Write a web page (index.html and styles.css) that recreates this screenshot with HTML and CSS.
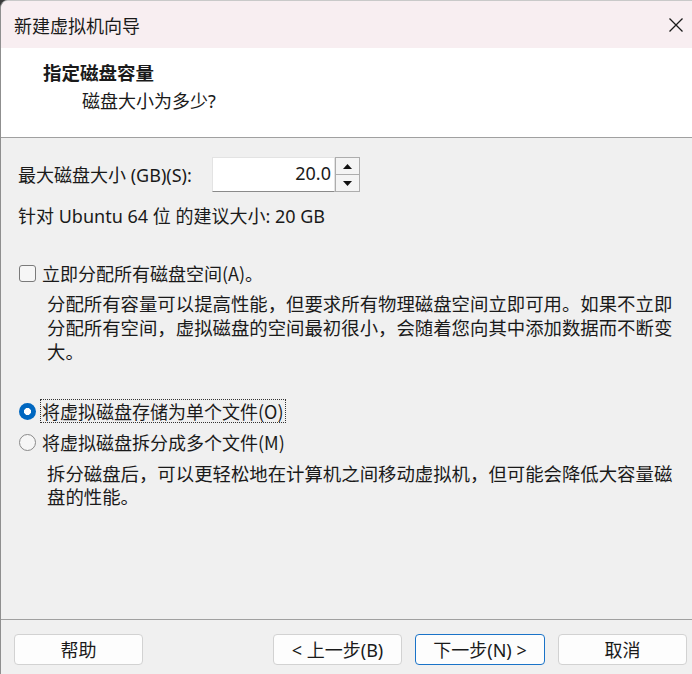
FILE: index.html
```html
<!DOCTYPE html>
<html lang="zh-CN">
<head>
<meta charset="utf-8">
<title>新建虚拟机向导</title>
<link rel="stylesheet" href="styles.css">
</head>
<body>
<div class="window">
  <div class="titlebar">
    <span class="title">新建虚拟机向导</span>
    <span class="close">
      <svg width="16" height="16" viewBox="0 0 16 16"><path d="M1.5 1.5 L14.5 14.5 M14.5 1.5 L1.5 14.5" stroke="#1a1a1a" stroke-width="1.3" fill="none"/></svg>
    </span>
  </div>
  <div class="header">
    <div class="h-title">指定磁盘容量</div>
    <div class="h-sub">磁盘大小为多少?</div>
  </div>
  <div class="body">
    <div class="size-row">
      <span class="size-label">最大磁盘大小 (GB)(S):</span>
      <div class="spin">
        <div class="spin-field">20.0</div>
        <div class="spin-btns">
          <span class="spin-btn"><svg width="9" height="5" viewBox="0 0 9 5"><path d="M0 5 L4.5 0 L9 5 Z" fill="#111"/></svg></span>
          <span class="spin-btn"><svg width="9" height="5" viewBox="0 0 9 5"><path d="M0 0 L4.5 5 L9 0 Z" fill="#111"/></svg></span>
        </div>
      </div>
    </div>
    <div class="rec">针对 Ubuntu 64 位 的建议大小: 20 GB</div>
    <div class="opt-row check-row">
      <span class="checkbox"></span>
      <span class="opt-label">立即分配所有磁盘空间(A)。</span>
    </div>
    <p class="desc">分配所有容量可以提高性能，但要求所有物理磁盘空间立即可用。如果不立即分配所有空间，虚拟磁盘的空间最初很小，会随着您向其中添加数据而不断变大。</p>
    <div class="opt-row radio-row1">
      <span class="radio checked"></span>
      <span class="opt-label focus">将虚拟磁盘存储为单个文件(O)</span>
    </div>
    <div class="opt-row radio-row2">
      <span class="radio"></span>
      <span class="opt-label">将虚拟磁盘拆分成多个文件(M)</span>
    </div>
    <p class="desc desc2">拆分磁盘后，可以更轻松地在计算机之间移动虚拟机，但可能会降低大容量磁盘的性能。</p>
  </div>
  <div class="footer">
    <button class="btn">帮助</button>
    <span class="spacer"></span>
    <button class="btn">&lt; 上一步(B)</button>
    <button class="btn primary">下一步(N) &gt;</button>
    <button class="btn">取消</button>
  </div>
</div>
</body>
</html>
```
FILE: styles.css
```css
* { box-sizing: border-box; }
html, body {
  margin: 0;
  padding: 0;
  width: 692px;
  height: 674px;
  overflow: hidden;
  background: #3a3a3a;
}
body {
  font-family: "Noto Sans", "Noto Sans CJK SC", sans-serif;
  color: #1a1a1a;
  font-size: 18px;
}
.window {
  width: 692px;
  height: 674px;
  background: #f0f0f0;
  border-left: 1px solid #8f8f8f;
  border-top: 1px solid #c9c9c9;
  border-top-left-radius: 8px;
  display: flex;
  flex-direction: column;
  overflow: hidden;
}
.titlebar {
  height: 47px;
  background: #f8eef1;
  display: flex;
  align-items: center;
  justify-content: space-between;
  padding: 0 0 0 13px;
}
.title {
  font-size: 18px;
  line-height: 24px;
  font-family: "Noto Sans CJK SC", sans-serif;
}
.close {
  width: 32px;
  height: 32px;
  display: flex;
  align-items: center;
  justify-content: center;
}
.header {
  height: 90px;
  background: #ffffff;
  border-bottom: 1px solid #a0a0a0;
  padding: 12px 0 0 0;
}
.h-title {
  font-family: "Noto Sans CJK SC", sans-serif;
  font-weight: 700;
  font-size: 18.5px;
  line-height: 24px;
  padding-left: 42px;
}
.h-sub {
  font-size: 18px;
  line-height: 24px;
  margin-top: 5px;
  padding-left: 81px;
}
.body {
  flex: 1;
  padding: 19px 0 0 17px;
  display: flex;
  flex-direction: column;
  align-items: flex-start;
}
.size-row {
  display: flex;
  align-items: center;
  height: 35px;
}
.size-label {
  line-height: 24px;
  width: 194px;
}
.spin {
  display: flex;
  height: 35px;
}
.spin-field {
  width: 123px;
  height: 35px;
  background: #ffffff;
  border: 1px solid #e3e3e3;
  border-bottom: 1px solid #8a8a8a;
  text-align: right;
  padding-right: 3px;
  line-height: 31px;
  font-size: 18px;
}
.spin-btns {
  width: 25px;
  display: flex;
  flex-direction: column;
  border: 1px solid #adadad;
  background: #e8e8e8;
}
.spin-btn {
  flex: 1;
  display: flex;
  align-items: center;
  justify-content: center;
  background: #f4f4f4;
}
.spin-btn + .spin-btn {
  border-top: 1px solid #adadad;
}
.rec {
  margin-top: 12px;
  line-height: 24px;
}
.opt-row {
  display: flex;
  align-items: center;
  height: 24px;
}
.check-row { margin-top: 33px; }
.radio-row1 { margin-top: 36px; }
.radio-row2 { margin-top: 7px; }
.checkbox {
  width: 17px;
  height: 17px;
  border: 1px solid #7a7a7a;
  border-radius: 3px;
  background: #f6f6f6;
  margin: 0 4px 0 1px;
}
.radio {
  width: 17px;
  height: 17px;
  border-radius: 50%;
  border: 1px solid #8a8a8a;
  background: #f6f6f6;
  margin: 0 4px 0 1px;
}
.radio.checked {
  border: none;
  background: radial-gradient(circle, #ffffff 0, #ffffff 3.2px, #0067c0 3.8px);
}
.opt-label {
  line-height: 22px;
  font-family: "Noto Sans CJK SC", sans-serif;
  border: 1px dotted transparent;
  padding: 0 1px;
}
.opt-label.focus {
  border: 1px dotted #333;
}
.desc {
  margin: 6px 0 0 29px;
  width: 638px;
  line-height: 24px;
  font-size: 18.4px;
  font-family: "Noto Sans CJK SC", sans-serif;
}
.desc2 { margin-top: 8px; line-height: 23px; }
.footer {
  height: 55px;
  border-top: 1px solid #a0a0a0;
  display: flex;
  align-items: flex-start;
  padding: 14px 5px 0 13px;
  gap: 13px;
}
.spacer { flex: 1; }
.btn {
  width: 129px;
  height: 31px;
  background: #fdfdfd;
  border: 1px solid #d2d2d2;
  border-radius: 4px;
  font-family: "Noto Sans", "Noto Sans CJK SC", sans-serif;
  font-size: 18px;
  color: #1a1a1a;
  line-height: 24px;
  padding: 0;
}
.btn.primary {
  width: 130px;
  border: 1px solid #1a73c8;
}
```
